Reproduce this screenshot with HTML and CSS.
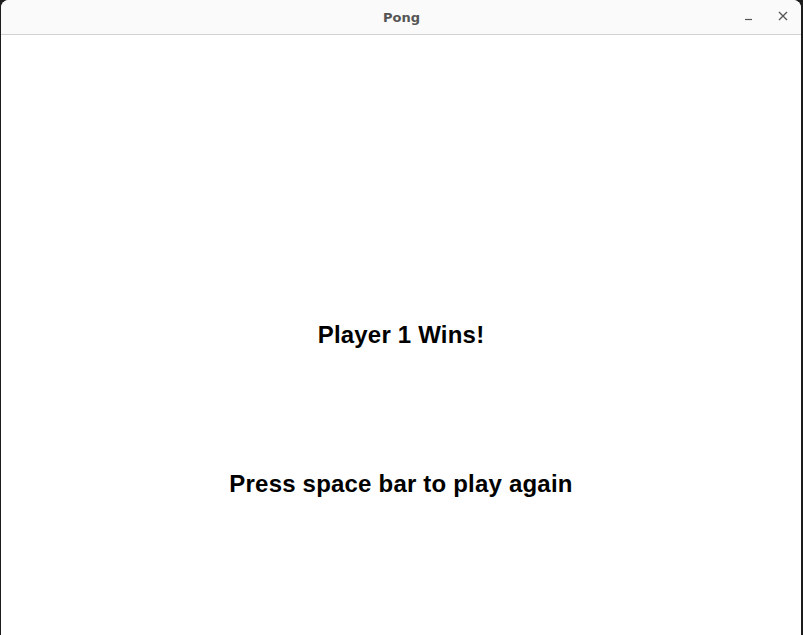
FILE: index.html
```html
<!DOCTYPE html>
<html>
<head>
<meta charset="utf-8">
<title>Pong</title>
<link rel="stylesheet" href="styles.css">
</head>
<body>
<div class="window">
  <div class="titlebar">
    <span class="title">Pong</span>
    <div class="controls">
      <svg class="btn" width="12" height="12" viewBox="0 0 12 12"><path d="M2 9.5h7" stroke="#555" stroke-width="1.2" fill="none"/></svg>
      <svg class="btn" width="12" height="12" viewBox="0 0 12 12"><path d="M2 2l8 8M10 2l-8 8" stroke="#555" stroke-width="1.3" fill="none"/></svg>
    </div>
  </div>
  <div class="content">
    <div class="msg">Player 1 Wins!</div>
    <div class="msg">Press space bar to play again</div>
  </div>
</div>
</body>
</html>
```
FILE: styles.css
```css
html, body {
  margin: 0;
  padding: 0;
  width: 803px;
  height: 635px;
  overflow: hidden;
  background: #1c1c1c;
}
.window {
  width: 800px;
  height: 635px;
  margin-left: 1px;
  background: #ffffff;
  display: flex;
  flex-direction: column;
  border-radius: 8px 8px 0 0;
  overflow: hidden;
}
.titlebar {
  height: 34px;
  flex: none;
  background: #fafafa;
  border-bottom: 1px solid #d2d2d2;
  position: relative;
  display: flex;
  align-items: center;
  justify-content: center;
}
.title {
  font-family: "DejaVu Sans", sans-serif;
  font-weight: bold;
  font-size: 13px;
  color: #555555;
  margin-left: 1px;
}
.controls {
  position: absolute;
  right: 12px;
  top: 10px;
  display: flex;
  gap: 22px;
}
.content {
  flex: 1;
  display: flex;
  flex-direction: column;
  align-items: center;
  padding-top: 285px;
  gap: 119px;
}
.msg {
  font-family: "Liberation Sans", Arial, sans-serif;
  font-weight: bold;
  font-size: 24px;
  line-height: 30px;
  color: #000;
  letter-spacing: 0.2px;
}
```
